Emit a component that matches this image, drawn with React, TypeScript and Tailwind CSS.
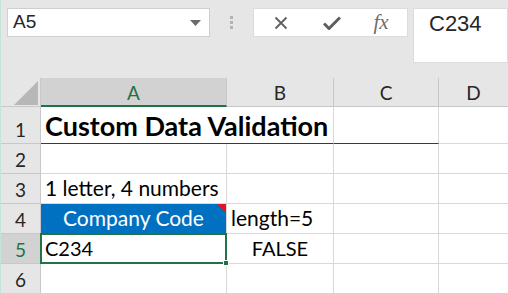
export default function App() {
  const grid = "border-r border-b border-[#d9d9d9]";
  const hdr = "border-r border-b border-[#c8c8c8] bg-[#e6e6e6] flex items-end justify-center pb-[4px] text-[19px] leading-none text-[#262626]";
  const cell = "flex items-end pb-[5px] px-[4px] text-[21px] leading-none text-black whitespace-nowrap";

  return (
    <div className="w-[508px] h-[293px] overflow-hidden bg-[#e6e6e6] border-l border-[#c2e4da] font-['Lato',sans-serif]">
      {/* name box + formula bar */}
      <div className="h-[78px] flex items-start pt-[8px]">
        <div className="ml-[6px] w-[203px] h-[29px] bg-white border border-[#cfcfcf] flex items-center justify-between pl-[5px] pr-[8px]">
          <span className="text-[19px] text-[#262626] font-['Liberation_Sans',sans-serif]">A5</span>
          <svg width="11" height="6" viewBox="0 0 11 6">
            <path d="M0 0h11L5.5 6z" fill="#6b6b6b" />
          </svg>
        </div>
        <div className="w-[43px] h-[29px] flex flex-col items-center justify-center gap-[2px]">
          <span className="w-[3px] h-[3px] bg-[#b3b3b3]" />
          <span className="w-[3px] h-[3px] bg-[#b3b3b3]" />
          <span className="w-[3px] h-[3px] bg-[#b3b3b3]" />
        </div>
        <div className="w-[155px] h-[29px] bg-white border border-[#dcdcdc] flex items-center">
          <div className="w-[52px] flex justify-center pl-[2px]">
            <svg width="14" height="14" viewBox="0 0 14 14">
              <path d="M1.5 1.5l11 11M12.5 1.5l-11 11" stroke="#5f5f5f" strokeWidth="1.8" />
            </svg>
          </div>
          <div className="w-[52px] flex justify-center">
            <svg width="18" height="14" viewBox="0 0 18 14">
              <path d="M1 7.5l5 5L17 1.5" stroke="#5f5f5f" strokeWidth="3" fill="none" />
            </svg>
          </div>
          <div className="w-[46px] flex justify-center">
            <span className="text-[21px] italic text-[#6e6e6e] font-['Liberation_Serif',serif] leading-none">fx</span>
          </div>
        </div>
        <div className="ml-[5px] flex-1 h-[55px] bg-white border border-[#dcdcdc] pl-[15px] leading-[30px]">
          <span className="text-[22px] text-[#262626] font-['Liberation_Sans',sans-serif]">C234</span>
        </div>
      </div>

      {/* sheet */}
      <div className="grid grid-cols-[40px_186px_107px_105px_70px] grid-rows-[29px_37px_30px_30px_30px_30px_30px] bg-white">
        {/* column headers */}
        <div className="border-r border-b border-[#c8c8c8] bg-[#e6e6e6] relative">
          <svg className="absolute left-[13px] top-[3px]" width="24" height="24" viewBox="0 0 24 24">
            <path d="M0 24H24V0z" fill="#b7b7b7" />
          </svg>
        </div>
        <div className="border-r border-b-2 border-r-[#c8c8c8] border-b-[#217346] bg-[#d2d2d2] flex items-end justify-center pb-[3px] text-[19px] leading-none text-[#217346]">A</div>
        <div className={hdr}>B</div>
        <div className={hdr}>C</div>
        <div className={hdr}>D</div>

        {/* row 1 */}
        <div className={hdr}>1</div>
        <div className="border-b border-[#3a3a3a] flex items-end pb-[4px] px-[4px] text-[27px] leading-none font-bold text-black whitespace-nowrap overflow-visible z-10">
          Custom Data Validation
        </div>
        <div className="border-r border-r-[#d9d9d9] border-b border-b-[#3a3a3a]" />
        <div className="border-r border-r-[#d9d9d9] border-b border-b-[#3a3a3a]" />
        <div className={grid} />

        {/* row 2 */}
        <div className={hdr}>2</div>
        <div className={grid} />
        <div className={grid} />
        <div className={grid} />
        <div className={grid} />

        {/* row 3 */}
        <div className={hdr}>3</div>
        <div className={`${grid} ${cell}`}>1 letter, 4 numbers</div>
        <div className={grid} />
        <div className={grid} />
        <div className={grid} />

        {/* row 4 */}
        <div className={hdr}>4</div>
        <div className={`border-r border-b border-[#d9d9d9] bg-[#0070c0] relative ${cell} justify-center text-white`}>
          Company Code
          <svg className="absolute right-0 top-0" width="9" height="9" viewBox="0 0 9 9">
            <path d="M0 0h9v9z" fill="#e81123" />
          </svg>
        </div>
        <div className={`${grid} ${cell} px-[3px]`}>length=5</div>
        <div className={grid} />
        <div className={grid} />

        {/* row 5 */}
        <div className="border-r border-b border-[#c8c8c8] bg-[#d2d2d2] flex items-end justify-center pb-[4px] text-[19px] leading-none text-[#217346]">5</div>
        <div className="relative border-2 border-[#217346] -ml-[1px] -mt-[1px] flex items-end pb-[4px] px-[3px] text-[20px] leading-none text-black">
          C234
          <span className="absolute -right-[4px] -bottom-[4px] w-[6px] h-[6px] bg-[#217346] border border-white" />
        </div>
        <div className={`${grid} flex items-end justify-center pb-[5px] text-[20px] leading-none text-black`}>FALSE</div>
        <div className={grid} />
        <div className={grid} />

        {/* row 6 */}
        <div className={hdr}>6</div>
        <div className={grid} />
        <div className={grid} />
        <div className={grid} />
        <div className={grid} />
      </div>
    </div>
  );
}
